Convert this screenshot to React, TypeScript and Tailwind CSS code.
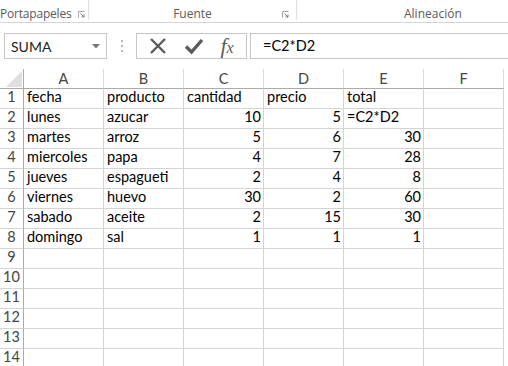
import React from "react";

const cols = ["A", "B", "C", "D", "E", "F"];

type Cell = { v: string; num?: boolean };

const data: Cell[][] = [
  [{ v: "fecha" }, { v: "producto" }, { v: "cantidad" }, { v: "precio" }, { v: "total" }],
  [{ v: "lunes" }, { v: "azucar" }, { v: "10", num: true }, { v: "5", num: true }, { v: "=C2*D2" }],
  [{ v: "martes" }, { v: "arroz" }, { v: "5", num: true }, { v: "6", num: true }, { v: "30", num: true }],
  [{ v: "miercoles" }, { v: "papa" }, { v: "4", num: true }, { v: "7", num: true }, { v: "28", num: true }],
  [{ v: "jueves" }, { v: "espagueti" }, { v: "2", num: true }, { v: "4", num: true }, { v: "8", num: true }],
  [{ v: "viernes" }, { v: "huevo" }, { v: "30", num: true }, { v: "2", num: true }, { v: "60", num: true }],
  [{ v: "sabado" }, { v: "aceite" }, { v: "2", num: true }, { v: "15", num: true }, { v: "30", num: true }],
  [{ v: "domingo" }, { v: "sal" }, { v: "1", num: true }, { v: "1", num: true }, { v: "1", num: true }],
];

const rows = Array.from({ length: 14 }, (_, i) => data[i] ?? []);

function Launcher() {
  return (
    <svg width="7" height="7" viewBox="0 0 7 7" className="shrink-0">
      <path d="M0.5 6.5V0.5H6.5" fill="none" stroke="#a6a6a6" strokeWidth="1" />
      <path d="M2.5 2.5L6 6M6 3.5V6H3.5" fill="none" stroke="#7a7a7a" strokeWidth="1" />
    </svg>
  );
}

function Ribbon() {
  return (
    <div
      className="flex h-[23px] border-b border-[#d5d5d5] text-[12px] leading-[16px] text-[#5a5a5a]"
      style={{ fontFamily: '"Open Sans", "Noto Sans", sans-serif' }}
    >
      <div className="mb-[2px] flex w-[89px] items-end gap-[7px] border-r border-[#e1e1e1]">
        <span className="translate-y-[2px] whitespace-nowrap tracking-[-0.2px]">Portapapeles</span>
        <div className="mb-[2px]">
          <Launcher />
        </div>
      </div>
      <div className="relative mb-[2px] flex w-[208px] items-end justify-center border-r border-[#e1e1e1]">
        <span className="translate-y-[2px]">Fuente</span>
        <div className="absolute right-[7px] bottom-[2px]">
          <Launcher />
        </div>
      </div>
      <div className="flex flex-1 items-end pl-[107px]">
        <span>Alineación</span>
      </div>
    </div>
  );
}

function FormulaBar() {
  return (
    <div
      className="flex h-[46px] items-start pt-[10px]"
      style={{ fontFamily: '"Lato", "Open Sans", sans-serif' }}
    >
      <div className="ml-[4px] flex h-[26px] w-[103px] items-center justify-between border border-[#c6c6c6] pl-[6px] pr-[6px]">
        <span className="text-[14px] text-[#222]">SUMA</span>
        <svg width="8" height="5" viewBox="0 0 8 5">
          <path d="M0 0H8L4 4.5Z" fill="#777" />
        </svg>
      </div>
      <div className="flex h-[26px] w-[29px] flex-col items-center justify-center gap-[3px]">
        <span className="h-[2px] w-[2px] bg-[#b5b5b5]" />
        <span className="h-[2px] w-[2px] bg-[#b5b5b5]" />
        <span className="h-[2px] w-[2px] bg-[#b5b5b5]" />
      </div>
      <div className="flex h-[26px] w-[111px] items-center justify-around border border-[#c6c6c6] px-[4px]">
        <svg width="18" height="18" viewBox="0 0 18 18">
          <path d="M2 2L16 16M16 2L2 16" stroke="#5b5b5b" strokeWidth="2.4" />
        </svg>
        <svg width="20" height="18" viewBox="0 0 20 18">
          <path d="M2 9.5L7.5 15L18 3" fill="none" stroke="#5b5b5b" strokeWidth="3.4" />
        </svg>
        <span
          className="text-[22px] italic leading-none text-[#5b5b5b]"
          style={{ fontFamily: '"Liberation Serif", serif' }}
        >
          f<span className="text-[16px]">x</span>
        </span>
      </div>
      <div className="ml-[3px] flex h-[26px] flex-1 items-center border-y border-l border-[#c6c6c6] pl-[12px]">
        <span className="text-[14.5px] text-black">=C2*D2</span>
      </div>
    </div>
  );
}

function Grid() {
  return (
    <div
      className="grid grid-cols-[24px_repeat(6,80px)] auto-rows-[20px] text-[14.5px]"
      style={{ fontFamily: '"Lato", "Open Sans", sans-serif' }}
    >
      <div className="relative border-r border-b border-[#ababab]">
        <svg width="16" height="16" viewBox="0 0 16 16" className="absolute right-[1px] bottom-[1px]">
          <path d="M16 0V16H0Z" fill="#dfdfdf" />
        </svg>
      </div>
      {cols.map((c) => (
        <div
          key={c}
          className="flex items-center justify-center border-r border-b border-r-[#dadada] border-b-[#ababab] text-[#444]"
        >
          {c}
        </div>
      ))}
      {rows.map((r, i) => (
        <React.Fragment key={i}>
          <div className="flex items-end justify-center border-r border-b border-r-[#ababab] border-b-[#d4d4d4] text-[#444]">
            {i + 1}
          </div>
          {cols.map((c, j) => {
            const cell = r[j];
            return (
              <div
                key={c}
                className={`flex items-end overflow-visible whitespace-nowrap border-r border-b border-[#d4d4d4] text-black ${
                  cell?.num ? "justify-end pr-[2px]" : "justify-start pl-[3px]"
                }`}
              >
                {cell?.v}
              </div>
            );
          })}
        </React.Fragment>
      ))}
    </div>
  );
}

export default function App() {
  return (
    <div className="h-[366px] w-[508px] overflow-hidden bg-white">
      <Ribbon />
      <FormulaBar />
      <Grid />
    </div>
  );
}
